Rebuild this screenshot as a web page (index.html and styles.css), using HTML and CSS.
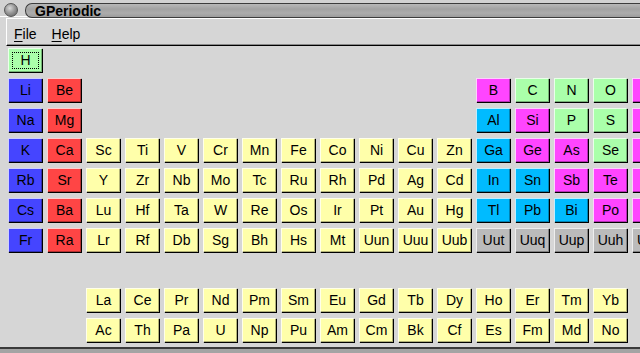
FILE: index.html
```html
<!DOCTYPE html>
<html lang="en">
<head>
  <meta charset="UTF-8">
  <meta name="viewport" content="width=device-width, initial-scale=1.0">
  <title>GPeriodic</title>
  <link rel="stylesheet" href="styles.css">
</head>
<body>
  <div class="window">
    <div class="titlebar">
      <span class="ball"></span>
      <div class="title-tab"><span class="title-text">GPeriodic</span></div>
    </div>
    <div class="menubar">
      <span class="menu-item"><u>F</u>ile</span>
      <span class="menu-item"><u>H</u>elp</span>
    </div>
    <div class="table">
      <div class="grid main">
        <button class="el nonmetal focus">H</button>
        <button class="el noble c18">He</button>

        <button class="el alkali">Li</button>
        <button class="el earth">Be</button>
        <button class="el halogen c13">B</button>
        <button class="el nonmetal">C</button>
        <button class="el nonmetal">N</button>
        <button class="el nonmetal">O</button>
        <button class="el halogen">F</button>
        <button class="el noble">Ne</button>

        <button class="el alkali">Na</button>
        <button class="el earth">Mg</button>
        <button class="el poor c13">Al</button>
        <button class="el halogen">Si</button>
        <button class="el nonmetal">P</button>
        <button class="el nonmetal">S</button>
        <button class="el halogen">Cl</button>
        <button class="el noble">Ar</button>

        <button class="el alkali">K</button>
        <button class="el earth">Ca</button>
        <button class="el trans">Sc</button>
        <button class="el trans">Ti</button>
        <button class="el trans">V</button>
        <button class="el trans">Cr</button>
        <button class="el trans">Mn</button>
        <button class="el trans">Fe</button>
        <button class="el trans">Co</button>
        <button class="el trans">Ni</button>
        <button class="el trans">Cu</button>
        <button class="el trans">Zn</button>
        <button class="el poor">Ga</button>
        <button class="el halogen">Ge</button>
        <button class="el halogen">As</button>
        <button class="el nonmetal">Se</button>
        <button class="el halogen">Br</button>
        <button class="el noble">Kr</button>

        <button class="el alkali">Rb</button>
        <button class="el earth">Sr</button>
        <button class="el trans">Y</button>
        <button class="el trans">Zr</button>
        <button class="el trans">Nb</button>
        <button class="el trans">Mo</button>
        <button class="el trans">Tc</button>
        <button class="el trans">Ru</button>
        <button class="el trans">Rh</button>
        <button class="el trans">Pd</button>
        <button class="el trans">Ag</button>
        <button class="el trans">Cd</button>
        <button class="el poor">In</button>
        <button class="el poor">Sn</button>
        <button class="el halogen">Sb</button>
        <button class="el halogen">Te</button>
        <button class="el halogen">I</button>
        <button class="el noble">Xe</button>

        <button class="el alkali">Cs</button>
        <button class="el earth">Ba</button>
        <button class="el trans">Lu</button>
        <button class="el trans">Hf</button>
        <button class="el trans">Ta</button>
        <button class="el trans">W</button>
        <button class="el trans">Re</button>
        <button class="el trans">Os</button>
        <button class="el trans">Ir</button>
        <button class="el trans">Pt</button>
        <button class="el trans">Au</button>
        <button class="el trans">Hg</button>
        <button class="el poor">Tl</button>
        <button class="el poor">Pb</button>
        <button class="el poor">Bi</button>
        <button class="el halogen">Po</button>
        <button class="el halogen">At</button>
        <button class="el noble">Rn</button>

        <button class="el alkali">Fr</button>
        <button class="el earth">Ra</button>
        <button class="el trans">Lr</button>
        <button class="el trans">Rf</button>
        <button class="el trans">Db</button>
        <button class="el trans">Sg</button>
        <button class="el trans">Bh</button>
        <button class="el trans">Hs</button>
        <button class="el trans">Mt</button>
        <button class="el trans">Uun</button>
        <button class="el trans">Uuu</button>
        <button class="el trans">Uub</button>
        <button class="el unknown">Uut</button>
        <button class="el unknown">Uuq</button>
        <button class="el unknown">Uup</button>
        <button class="el unknown">Uuh</button>
        <button class="el unknown">Uus</button>
        <button class="el unknown">Uuo</button>
      </div>

      <div class="grid fblock">
        <button class="el trans">La</button>
        <button class="el trans">Ce</button>
        <button class="el trans">Pr</button>
        <button class="el trans">Nd</button>
        <button class="el trans">Pm</button>
        <button class="el trans">Sm</button>
        <button class="el trans">Eu</button>
        <button class="el trans">Gd</button>
        <button class="el trans">Tb</button>
        <button class="el trans">Dy</button>
        <button class="el trans">Ho</button>
        <button class="el trans">Er</button>
        <button class="el trans">Tm</button>
        <button class="el trans">Yb</button>

        <button class="el trans">Ac</button>
        <button class="el trans">Th</button>
        <button class="el trans">Pa</button>
        <button class="el trans">U</button>
        <button class="el trans">Np</button>
        <button class="el trans">Pu</button>
        <button class="el trans">Am</button>
        <button class="el trans">Cm</button>
        <button class="el trans">Bk</button>
        <button class="el trans">Cf</button>
        <button class="el trans">Es</button>
        <button class="el trans">Fm</button>
        <button class="el trans">Md</button>
        <button class="el trans">No</button>
      </div>
    </div>
  </div>
</body>
</html>
```

FILE: styles.css
```css
body {
  margin: 0;
  width: 640px;
  height: 353px;
  overflow: hidden;
  background-color: #a4a4a4;
  font-family: 'Liberation Sans', Arial, sans-serif;
}
.window {
  width: 760px;
  height: 347px;
  background-color: #d6d6d6;
  border-bottom: 2px solid #3a3a3a;
  overflow: hidden;
}
.titlebar {
  display: flex;
  align-items: flex-start;
  height: 17px;
  padding-top: 3px;
  box-sizing: border-box;
  background-color: #d2d2d2;
  border-bottom: 1px solid #ffffff;
}
.ball {
  width: 12px;
  height: 12px;
  margin-left: 4px;
  border-radius: 50%;
  border: 1px solid #555555;
  background: radial-gradient(circle at 40% 35%, #d8d8d8 0, #9a9a9a 45%, #5a5a5a 100%);
  flex-shrink: 0;
}
.title-tab {
  flex: 1;
  height: 13px;
  margin-left: 7px;
  border: 1px solid #3c3c3c;
  border-right: none;
  border-radius: 7px 0 0 7px;
  background: linear-gradient(#b8b8b8, #a2a2a2 40%, #acacac 70%, #9c9c9c);
  display: flex;
  align-items: center;
}
.title-text {
  margin-left: 9px;
  font-size: 14px;
  font-weight: bold;
  color: #000000;
  line-height: 13px;
  padding-top: 1px;
}
.menubar {
  display: flex;
  height: 28px;
  margin-top: 1px;
  margin-left: 6px;
  padding-left: 7px;
  padding-top: 3px;
  box-sizing: border-box;
  border-top: 1px solid #ffffff;
  border-left: 1px solid #ffffff;
  border-bottom: 1px solid #000000;
  box-shadow: inset 0 -1px 0 #8a8a8a;
  align-items: center;
  font-size: 14px;
  color: #000000;
}
.menu-item {
  margin-right: 15px;
}
.menu-item u {
  text-decoration-thickness: 1px;
  text-underline-offset: 2px;
}
.table {
  padding: 2px 0 0 8px;
}
.grid {
  display: grid;
  grid-template-columns: repeat(18, 35px);
  grid-auto-rows: 25px;
  column-gap: 4px;
  row-gap: 5px;
}
.fblock {
  margin-top: 35px;
  margin-left: 78px;
  grid-template-columns: repeat(14, 35px);
}
.c13 {
  grid-column-start: 13;
}
.c18 {
  grid-column-start: 18;
}
.el {
  margin: 0;
  padding: 0 0 1px;
  border: none;
  font-family: 'Liberation Sans', Arial, sans-serif;
  font-size: 14px;
  color: #000000;
  box-shadow:
    inset 1px 1px 0 rgba(255, 255, 255, 0.75),
    inset -1px -1px 0 #000000,
    inset -2px -2px 0 rgba(0, 0, 0, 0.3);
  cursor: pointer;
}
.focus {
  outline: 1px dotted #000000;
  outline-offset: -5px;
}
.alkali {
  background-color: #4545ff;
}
.earth {
  background-color: #ff4545;
}
.trans {
  background-color: #ffffaa;
}
.nonmetal {
  background-color: #aaffaa;
}
.halogen {
  background-color: #ff45ff;
}
.poor {
  background-color: #00bbff;
}
.unknown {
  background-color: #bbbbbb;
}
.noble {
  background-color: #ffaa55;
}
```
